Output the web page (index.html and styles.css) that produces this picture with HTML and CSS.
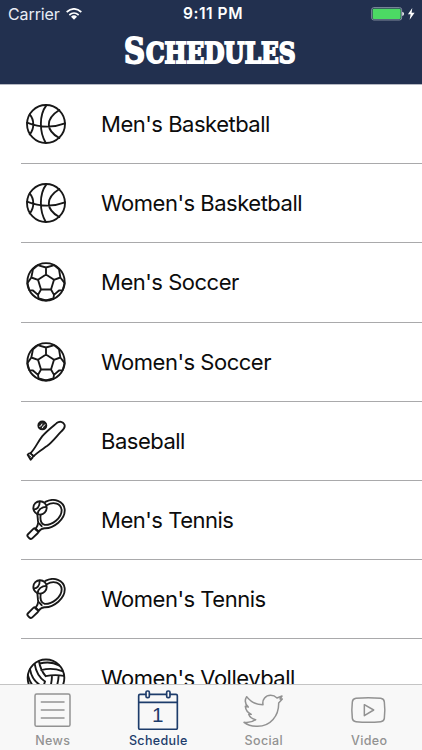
FILE: index.html
```html
<!DOCTYPE html>
<html lang="en">
<head>
<meta charset="utf-8">
<title>Schedules</title>
<link rel="stylesheet" href="styles.css">
</head>
<body>
<svg class="defs" aria-hidden="true">
  <symbol id="basketball" viewBox="32 24 126 126">
    <circle cx="95" cy="87" r="57"/>
    <path d="M38 83Q96 106 152 85M96 31C74 60 75 111 94 143M46 58C60 74 61 101 46 118M135 45C92 72 94 107 135 129"/>
  </symbol>
  <symbol id="soccer" viewBox="32 19.5 126 126">
    <circle cx="95" cy="82" r="56"/>
    <path d="M95 60L119 76L110 105H80L71 76ZM95 60V39M119 76L138 69M110 105L119 121M80 105L71 121M71 76L51 69M70 32L95 39L120 32M138 69L134 44M138 69L151 86M51 69L56 44M51 69L39 86M45 107L56 108L71 121L73 133M145 107L134 108L119 121L117 133M73 132L95 138L117 132M56 44L70 32M134 44L120 32M39 86L45 107M151 86L145 107"/>
  </symbol>
  <symbol id="baseball" viewBox="32 29.7 126 126">
    <circle class="dark" cx="84" cy="46" r="12"/>
    <path class="light" d="M76 49Q82 49 83 42M84 53Q86 46 92 44"/>
    <path d="M49 129C62 116 70 96 84 78C98 62 114 50 127 39C136 32 146 35 150 43C154 51 148 58 141 64C126 79 116 94 98 108C84 118 70 126 58 138M40 134Q45 127 51 132L56 137Q57 143 49 149Z"/>
    <path class="thin" d="M48 128L60 138M44 136L51 142"/>
  </symbol>
  <symbol id="tennis" viewBox="32 27.3 126 126">
    <path d="M93 36C119 22 148 35 151 58C154 89 117 116 91 115C82 115 77 120 72 126L63 118C71 108 73 101 71 93L69 72"/>
    <path d="M97 46C119 33 140 42 142 61C142 85 113 106 91 105C79 101 77 87 79 74"/>
    <path d="M57 117Q61 113 65 117L71 123Q74 127 70 130L53 146Q49 149 45 145L41 141Q37 137 41 133ZM75 101L82 109"/>
    <circle class="paper" cx="77" cy="54" r="20"/>
    <path d="M58 58C67 60 77 50 76 35M70 72C71 60 82 51 96 51"/>
  </symbol>
  <symbol id="volleyball" viewBox="32 52.5 126 126">
    <circle cx="95" cy="115" r="55"/>
    <path d="M61 73C65 98 77 116 92 126M74 66C77 83 83 97 94 110M76 72Q110 64 134 78M81 92Q113 83 144 95M94 110Q120 104 149 109M47 89C51 113 67 133 87 142M41 108C47 132 61 149 81 162M92 126L87 142L80 164M113 109Q112 143 97 168M133 108Q131 145 113 165"/>
  </symbol>
</svg>

<div class="screen">
  <header class="header">
    <div class="status">
      <div class="carrier">
        <span>Carrier</span>
        <svg class="wifi" viewBox="0 0 48 36"><path d="M2 12Q24 -7 46 12M10 21Q24 9 38 21"/><path class="solid" d="M15 26Q24 18 33 26L24 35Z"/></svg>
      </div>
      <span class="clock">9:11 PM</span>
      <div class="power">
        <svg class="battery" viewBox="0 0 132 40"><rect class="case" x="2" y="2" width="90" height="37" rx="6"/><rect class="charge" x="5" y="5" width="84" height="31" rx="3"/><path class="solid" d="M94 14Q99 15 99 20.500Q99 26 94 27ZM124 3L111 22H119L116 38L131 17H122Z"/></svg>
      </div>
    </div>
    <h1 class="title"><svg viewBox="0 0 176 36" role="img"><text class="initial" x="2" y="30" textLength="21" lengthAdjust="spacingAndGlyphs">S</text><text class="rest" x="24" y="30" textLength="149.500" lengthAdjust="spacingAndGlyphs">CHEDULES</text></svg></h1>
  </header>

  <main class="list">
    <div class="row"><svg class="icon"><use href="#basketball"/></svg><span>Men's Basketball</span></div>
    <div class="row"><svg class="icon"><use href="#basketball"/></svg><span>Women's Basketball</span></div>
    <div class="row"><svg class="icon"><use href="#soccer"/></svg><span>Men's Soccer</span></div>
    <div class="row"><svg class="icon"><use href="#soccer"/></svg><span>Women's Soccer</span></div>
    <div class="row"><svg class="icon"><use href="#baseball"/></svg><span>Baseball</span></div>
    <div class="row"><svg class="icon"><use href="#tennis"/></svg><span>Men's Tennis</span></div>
    <div class="row"><svg class="icon"><use href="#tennis"/></svg><span>Women's Tennis</span></div>
    <div class="row"><svg class="icon"><use href="#volleyball"/></svg><span>Women's Volleyball</span></div>
  </main>

  <nav class="tabs">
    <div class="tab">
      <svg viewBox="50 144 126 126"><rect x="59" y="162" width="105" height="97" rx="5"/><path d="M78 186H146M78 210H146M78 234H146"/></svg>
      <span>News</span>
    </div>
    <div class="tab active">
      <svg viewBox="112 144 126 126"><path d="M138 163H121Q117 163 117 167V264Q117 268 121 268H229Q233 268 233 264V167Q233 163 229 163H212M150 163H199M117 187H233"/><rect x="139" y="153" width="10" height="20" rx="4"/><rect x="201" y="153" width="10" height="20" rx="4"/><text class="day" x="174" y="247">1</text></svg>
      <span>Schedule</span>
    </div>
    <div class="tab">
      <svg viewBox="428 144 126 126"><path d="M439 170C450 185 466 194 488 194C485 178 496 166 511 166C520 166 525 169 530 174L545 168L539 177L546 177L535 189C536 228 510 259 472 259C455 259 442 255 431 247C445 249 457 246 466 239C455 237 448 231 445 223H453C442 218 436 209 435 199L444 201C434 192 433 180 439 170Z"/></svg>
      <span>Social</span>
    </div>
    <div class="tab">
      <svg viewBox="112 144 126 126"><path d="M136 175Q173 171 210 175Q220 176 221 186Q224 210 221 235Q220 244 210 245Q173 249 136 245Q126 244 125 235Q122 210 125 186Q126 176 136 175ZM161 194V227L189 210Z"/></svg>
      <span>Video</span>
    </div>
  </nav>
</div>
</body>
</html>
```
FILE: styles.css
```css
* { box-sizing: border-box; }
body { margin: 0; font-family: Inter, "Liberation Sans", sans-serif; background: #fff; }
.defs { display: none; }
.screen { width: 422px; height: 750px; display: flex; flex-direction: column; overflow: hidden; }

.header { height: 85px; flex: none; background: #22304f; border-bottom: 1px solid #b5b8c2; color: #fff; }
.status { height: 28px; padding: 0 7px 0 8px; display: grid; grid-template-columns: 1fr auto 1fr; align-items: center; font-size: 16px; line-height: 28px; }
.carrier { display: flex; align-items: center; gap: 6px; color: #e9edf5; letter-spacing: -0.1px; }
.wifi { width: 16px; height: 12px; fill: none; stroke: #fff; stroke-width: 5; }
.solid { fill: #fff; stroke: none; }
.clock { font-weight: 600; font-size: 15.5px; letter-spacing: 0.55px; margin-left: 3px; }
.power { display: flex; justify-content: flex-end; }
.battery { width: 44px; height: 13.3px; }
.case { fill: none; stroke: #8993a5; stroke-width: 3; }
.charge { fill: #4cd964; }
.title { margin: 5px 0 0; display: flex; justify-content: center; }
.title svg { width: 176px; height: 36px; margin-left: -2px; overflow: visible; }
.title text { font-family: "DejaVu Serif", serif; font-weight: 700; fill: #fff; stroke: #fff; stroke-width: 2; }
.initial { font-size: 34.5px; }
.rest { font-size: 28px; }

.list { flex: 1; min-height: 0; overflow: hidden; }
.row { height: 79.2px; margin-left: 21px; padding-left: 4px; border-bottom: 1px solid #a9a9ab; display: flex; align-items: center; gap: 34px; font-size: 22px; letter-spacing: -0.49px; color: #0c0c0c; white-space: nowrap; }
.icon { width: 42px; height: 42px; flex: none; fill: none; stroke: #181818; stroke-width: 5.6; stroke-linejoin: round; stroke-linecap: round; }
.dark { fill: #252525; }
.light { stroke: #fff; stroke-width: 3; }
.thin { stroke-width: 3; }
.paper { fill: #fff; }

.tabs { height: 66px; flex: none; display: grid; grid-template-columns: repeat(4, 1fr); background: #f8f8f8; border-top: 1px solid #c4c4c4; color: #929292; }
.tab { display: flex; flex-direction: column; align-items: center; padding-top: 3px; font-size: 12.5px; line-height: 20px; font-weight: 500; letter-spacing: 0.35px; }
.tab svg { width: 42px; height: 42px; fill: none; stroke: currentColor; stroke-width: 4.5; stroke-linejoin: round; stroke-linecap: round; }
.tab span { margin-top: 1px; }
.tab.active { color: #1d3c6b; }
.tab.active svg { stroke-width: 5; }
.day { font-family: "Liberation Sans", sans-serif; font-size: 62px; font-weight: 400; text-anchor: middle; fill: currentColor; stroke: none; letter-spacing: 0; }
```
